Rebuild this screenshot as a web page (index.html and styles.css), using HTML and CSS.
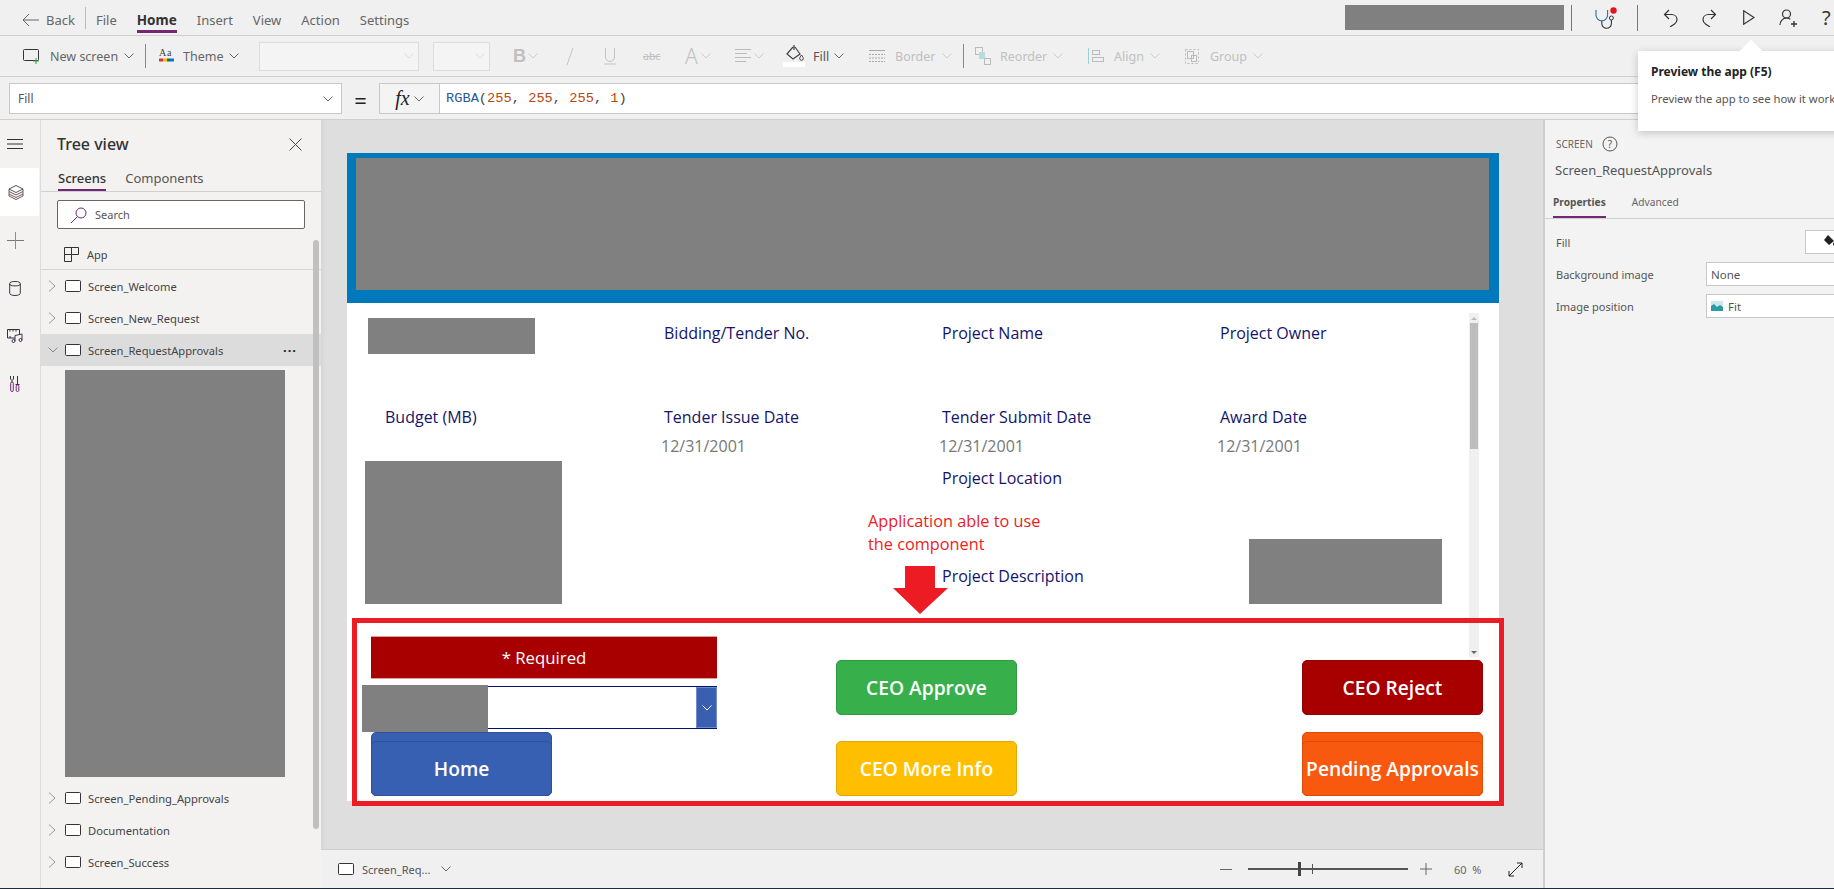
FILE: index.html
```html
<!DOCTYPE html>
<html lang="en">

<head>
    <meta charset="UTF-8">
    <meta name="viewport" content="width=device-width, initial-scale=1.0">
    <title>Power Apps Studio</title>
    <link rel="stylesheet" href="styles.css">
</head>

<body>
    <svg class="sprite" width="0" height="0">
        <symbol id="chev" viewBox="0 0 10 6">
            <path d="M.5.5 5 5 9.5.5" fill="none" stroke="currentColor" />
        </symbol>
        <symbol id="chev-right" viewBox="0 0 8 12">
            <path d="M1 .5 7 6 1 11.5" fill="none" stroke="currentColor" />
        </symbol>
        <symbol id="screen" viewBox="0 0 16 12">
            <rect x=".5" y=".5" width="15" height="11" rx="1" fill="#fff" stroke="#333" />
        </symbol>
    </svg>

    <!-- top menu -->
    <header class="menu-bar">
        <svg class="back-icon" width="17" height="14" viewBox="0 0 17 14">
            <path d="M7 1 1 7l6 6M1 7h16" fill="none" stroke="#666" />
        </svg>
        <span class="menu-back">Back</span>
        <span class="menu-sep"></span>
        <nav class="menu-items">
            <a>File</a>
            <a class="active">Home</a>
            <a>Insert</a>
            <a>View</a>
            <a>Action</a>
            <a>Settings</a>
        </nav>
        <div class="menu-right">
            <div class="redacted app-name"></div>
            <span class="menu-sep tall"></span>
            <svg class="a-steth" width="22" height="22" viewBox="0 0 22 22">
                <path d="M1 3v5a5.800 5.800 0 0 0 11.600 0V3" fill="none" stroke="#2b6ca8" stroke-width="1.100" />
                <path d="M6.800 14v2.500a4.800 4.800 0 0 0 9.600 0V13" fill="none" stroke="#333" stroke-width="1.100" />
                <circle cx="16.400" cy="11" r="2" fill="none" stroke="#333" />
                <circle cx="18.500" cy="3.500" r="3.200" fill="#e81123" />
            </svg>
            <span class="menu-sep tall second"></span>
            <svg class="a-undo" width="15" height="18" viewBox="0 0 15 18">
                <path d="M6 1 1.500 5.500 6 10M1.500 5.500h7c3.500 0 5.500 2.500 5.500 5 0 2-1 3.500-2.500 4.500L7 18" fill="none" stroke="#333" stroke-width="1.200" />
            </svg>
            <svg class="a-redo" width="15" height="18" viewBox="0 0 15 18">
                <path d="M9 1l4.500 4.500L9 10M13.500 5.500h-7C3 5.500 1 8 1 10.500c0 2 1 3.500 2.500 4.500L8 18" fill="none" stroke="#333" stroke-width="1.200" />
            </svg>
            <svg class="a-play" width="12" height="15" viewBox="0 0 12 15">
                <path d="M.7.800v13.400l10.300-6.700z" fill="none" stroke="#333" stroke-width="1.200" />
            </svg>
            <svg class="a-person" width="18" height="18" viewBox="0 0 18 18">
                <circle cx="7.500" cy="5" r="4" fill="none" stroke="#333" stroke-width="1.200" />
                <path d="M1 16c0-3.800 2.800-7 6.500-7 1.500 0 2.800.5 3.800 1.300" fill="none" stroke="#333" stroke-width="1.200" />
                <path d="M15 12v6M12 15h6" stroke="#333" stroke-width="1.300" />
            </svg>
            <span class="help-mark">?</span>
        </div>
    </header>

    <!-- ribbon -->
    <div class="ribbon">
        <div class="tool t-new">
            <svg width="17" height="15" viewBox="0 0 17 15">
                <rect x=".5" y=".5" width="15" height="11" rx="1" fill="none" stroke="#333" />
                <path d="M13 9v6M10 12h6" stroke="#3a9c3a" fill="none" />
            </svg>
            <span>New screen</span>
            <svg class="chev"><use href="#chev" /></svg>
        </div>
        <span class="ribbon-sep"></span>
        <div class="tool t-theme">
            <svg width="15" height="16" viewBox="0 0 15 16">
                <text x="0" y="8" class="theme-a">A</text>
                <text x="8" y="8" class="theme-a">a</text>
                <path d="M0 12h4" stroke="#d13438" stroke-width="3" />
                <path d="M4 12h4" stroke="#ffb900" stroke-width="3" />
                <path d="M8 12h3" stroke="#107c10" stroke-width="3" />
                <path d="M11 12h4" stroke="#0078d4" stroke-width="3" />
            </svg>
            <span>Theme</span>
            <svg class="chev"><use href="#chev" /></svg>
        </div>
        <div class="ribbon-select font-family"><svg class="chev"><use href="#chev" /></svg></div>
        <div class="ribbon-select font-size"><svg class="chev"><use href="#chev" /></svg></div>
        <div class="tool off t-bold"><b class="glyph-b">B</b><svg class="chev"><use href="#chev" /></svg></div>
        <div class="tool off t-italic"><svg width="8" height="17" viewBox="0 0 8 17"><path d="M7 0 1 17" stroke="#c4c4c4" /></svg></div>
        <div class="tool off t-under"><svg width="12" height="17" viewBox="0 0 12 17"><path d="M1.500 0v9a4.500 4.500 0 0 0 9 0V0M0 16h12" fill="none" stroke="#c4c4c4" /></svg></div>
        <div class="tool off t-strike"><span class="glyph-abc">abc</span></div>
        <div class="tool off t-color"><span class="glyph-a">A</span><svg class="chev"><use href="#chev" /></svg></div>
        <div class="tool off t-align">
            <svg width="16" height="14" viewBox="0 0 16 14"><path d="M0 .5h16M0 4.500h12M0 8.500h16M0 12.500h11" stroke="#bbb" fill="none" /></svg>
            <svg class="chev"><use href="#chev" /></svg>
        </div>
        <div class="tool t-fill">
            <div class="fill-icon">
                <svg width="18" height="17" viewBox="0 0 18 17">
                    <path d="M8 0v5M7 2 1 9l6 5 7-5-5-7" fill="none" stroke="#444" stroke-width="1.200" />
                    <path d="M15.500 10c1 1.500 1.800 2.500 1.800 3.500a1.800 1.800 0 0 1-3.600 0c0-1 .8-2 1.800-3.500z" fill="none" stroke="#444" />
                </svg>
            </div>
            <span>Fill</span>
            <svg class="chev"><use href="#chev" /></svg>
        </div>
        <div class="tool off t-border">
            <svg width="16" height="12" viewBox="0 0 16 12"><path d="M0 .5h16" stroke="#aaa" /><path d="M0 4.500h16M0 8h16M0 11.500h16" stroke="#aaa" stroke-dasharray="2 1" /></svg>
            <span>Border</span>
            <svg class="chev"><use href="#chev" /></svg>
        </div>
        <span class="ribbon-sep"></span>
        <div class="tool off t-reorder">
            <svg width="16" height="18" viewBox="0 0 16 18">
                <rect x=".5" y=".5" width="7" height="7" fill="none" stroke="#bbb" />
                <rect x="4" y="5" width="6" height="7" fill="#b5dde0" />
                <rect x="9.500" y="11.500" width="6" height="6" fill="none" stroke="#bbb" />
            </svg>
            <span>Reorder</span>
            <svg class="chev"><use href="#chev" /></svg>
        </div>
        <div class="tool off t-arrange">
            <svg width="16" height="16" viewBox="0 0 16 16">
                <path d="M.5 0v16" stroke="#9fd0d6" />
                <rect x="4.500" y="2.500" width="7" height="4" fill="none" stroke="#bbb" />
                <rect x="4.500" y="9.500" width="11" height="4" fill="none" stroke="#bbb" />
            </svg>
            <span>Align</span>
            <svg class="chev"><use href="#chev" /></svg>
        </div>
        <div class="tool off t-group">
            <svg width="16" height="17" viewBox="0 0 16 17">
                <rect x="1.500" y="1.500" width="13" height="14" fill="none" stroke="#bbb" stroke-dasharray="2 2" />
                <rect x="3.500" y="3.500" width="6" height="7" fill="none" stroke="#bbb" />
                <rect x="7.500" y="7.500" width="5" height="6" fill="none" stroke="#bbb" />
            </svg>
            <span>Group</span>
            <svg class="chev"><use href="#chev" /></svg>
        </div>
    </div>

    <!-- formula bar -->
    <div class="formula-bar">
        <div class="prop-select">
            <span>Fill</span>
            <svg class="chev"><use href="#chev" /></svg>
        </div>
        <span class="equals">=</span>
        <div class="fx-btn">
            <i>fx</i>
            <svg class="chev"><use href="#chev" /></svg>
        </div>
        <div class="formula-input"><span class="fn">RGBA</span>(<span class="num">255</span>, <span class="num">255</span>, <span class="num">255</span>, <span class="num">1</span>)</div>
    </div>

    <div class="tooltip">
        <span class="tooltip-arrow"></span>
        <h4>Preview the app (F5)</h4>
        <p>Preview the app to see how it works</p>
    </div>

    <main class="workspace">
        <!-- icon rail -->
        <aside class="rail">
            <div class="rail-item">
                <svg width="16" height="10" viewBox="0 0 16 10"><path d="M0 .5h16M0 5h16M0 9.500h16" stroke="#333" /></svg>
            </div>
            <div class="rail-item on">
                <svg width="16" height="15" viewBox="0 0 16 15">
                    <path d="M8 .5 15 4 8 7.500 1 4z" fill="none" stroke="#555" />
                    <path d="M1 4v2.500L8 10l7-3.500V4M1 6.500V9l7 3.500L15 9V6.500M1 9v2l7 3.500 7-3.500V9" fill="none" stroke="#6b5a5a" />
                </svg>
            </div>
            <div class="rail-item">
                <svg width="17" height="17" viewBox="0 0 17 17"><path d="M0 8.500h17" stroke="#777" /><path d="M8.500 0v17" stroke="#9a8a70" /></svg>
            </div>
            <div class="rail-item">
                <svg width="12" height="15" viewBox="0 0 12 15">
                    <ellipse cx="6" cy="2.700" rx="5.300" ry="2.200" fill="none" stroke="#3a3a4a" />
                    <path d="M.7 2.700v9.600c0 1.200 2.300 2.200 5.300 2.200s5.300-1 5.300-2.200V2.700" fill="none" stroke="#3a3a4a" />
                </svg>
            </div>
            <div class="rail-item">
                <svg width="17" height="14" viewBox="0 0 17 14">
                    <path d="M8 9H.5V.5h12V5" fill="none" stroke="#333" />
                    <path d="M3 .5v2M6 .5v2M9 .5v2M3 7v2" stroke="#333" />
                    <path d="M8 12V6.500l7-1.500v6" fill="none" stroke="#4a2f55" />
                    <circle cx="6.500" cy="12" r="1.500" fill="none" stroke="#4a2f55" />
                    <circle cx="13.500" cy="11" r="1.500" fill="none" stroke="#4a2f55" />
                </svg>
            </div>
            <div class="rail-item">
                <svg width="10" height="16" viewBox="0 0 10 16">
                    <path d="M.5 0v3l1.500 1.500L3.500 3V0M2 4.500V6" fill="none" stroke="#333" />
                    <rect x=".7" y="6" width="2.600" height="9.500" rx="1.200" fill="none" stroke="#742774" />
                    <path d="M7.500 0v8M5.500 8.500h4" fill="none" stroke="#333" />
                    <rect x="6.200" y="9" width="2.600" height="6.500" rx="1.200" fill="none" stroke="#742774" />
                </svg>
            </div>
        </aside>

        <!-- tree view -->
        <aside class="tree">
            <div class="tree-head">
                <h3>Tree view</h3>
                <svg width="13" height="13" viewBox="0 0 13 13"><path d="M.5.5l12 12M12.500.5l-12 12" stroke="#444" /></svg>
            </div>
            <div class="tree-tabs">
                <span class="active">Screens</span>
                <span>Components</span>
            </div>
            <div class="tree-search">
                <svg width="18" height="18" viewBox="0 0 18 18">
                    <circle cx="11" cy="7" r="5" fill="none" stroke="#742774" />
                    <path d="M7.500 10.500 1 17" stroke="#742774" />
                </svg>
                <span>Search</span>
            </div>
            <div class="tree-app">
                <svg width="15" height="15" viewBox="0 0 15 15">
                    <path d="M.5.500h14v7h-7v7h-7zM.5 7.500h7M7.500.5v7" fill="none" stroke="#333" />
                </svg>
                <span>App</span>
            </div>
            <div class="tree-row"><svg class="row-chev"><use href="#chev-right" /></svg><svg class="row-screen"><use href="#screen" /></svg><span>Screen_Welcome</span></div>
            <div class="tree-row"><svg class="row-chev"><use href="#chev-right" /></svg><svg class="row-screen"><use href="#screen" /></svg><span>Screen_New_Request</span></div>
            <div class="tree-row selected">
                <svg class="row-chev-down"><use href="#chev" /></svg><svg class="row-screen"><use href="#screen" /></svg><span>Screen_RequestApprovals</span>
                <span class="row-more">···</span>
            </div>
            <div class="redacted tree-children"></div>
            <div class="tree-row"><svg class="row-chev"><use href="#chev-right" /></svg><svg class="row-screen"><use href="#screen" /></svg><span>Screen_Pending_Approvals</span></div>
            <div class="tree-row"><svg class="row-chev"><use href="#chev-right" /></svg><svg class="row-screen"><use href="#screen" /></svg><span>Documentation</span></div>
            <div class="tree-row"><svg class="row-chev"><use href="#chev-right" /></svg><svg class="row-screen"><use href="#screen" /></svg><span>Screen_Success</span></div>
            <div class="tree-scroll"></div>
        </aside>

        <!-- canvas -->
        <section class="center">
            <div class="stage">
                <div class="app-screen">
                    <div class="app-header">
                        <div class="redacted"></div>
                    </div>
                    <div class="form-grid">
                        <div class="redacted f-logo"></div>
                        <div class="f-label">Bidding/Tender No.</div>
                        <div class="f-label">Project Name</div>
                        <div class="f-label">Project Owner</div>

                        <div class="f-label budget">Budget (MB)</div>
                        <div class="f-label">Tender Issue Date</div>
                        <div class="f-label">Tender Submit Date</div>
                        <div class="f-label">Award Date</div>

                        <div></div>
                        <div class="f-date">12/31/2001</div>
                        <div class="f-date">12/31/2001</div>
                        <div class="f-date">12/31/2001</div>

                        <div class="redacted f-left-block"></div>
                        <div></div>
                        <div class="f-label location">Project Location</div>
                        <div></div>

                        <div></div>
                        <div class="f-label description">Project Description</div>
                        <div class="redacted f-right-block"></div>
                    </div>

                    <div class="gallery-scroll">
                        <span class="scroll-up"></span>
                        <span class="scroll-thumb"></span>
                        <span class="scroll-down"></span>
                    </div>

                    <div class="note">Application able to use<br>the component</div>
                    <svg class="note-arrow" width="55" height="48" viewBox="0 0 55 48">
                        <path d="M12 0h30v22h13L27 48 0 22h12z" fill="#ed1c24" />
                    </svg>

                    <!-- the component, boxed in red -->
                    <div class="component">
                        <div class="comp-col comp-left">
                            <div class="required">* Required</div>
                            <div class="combo">
                                <span class="combo-btn"><svg class="chev"><use href="#chev" /></svg></span>
                            </div>
                            <button class="btn btn-home"><span>Home</span></button>
                        </div>
                        <div class="comp-col comp-mid">
                            <button class="btn btn-approve">CEO Approve</button>
                            <button class="btn btn-info">CEO More Info</button>
                        </div>
                        <div class="comp-col comp-right">
                            <button class="btn btn-reject">CEO Reject</button>
                            <button class="btn btn-pending"><span>Pending Approvals</span></button>
                        </div>
                        <div class="redacted combo-cover"></div>
                    </div>
                </div>
            </div>

            <footer class="status-bar">
                <svg class="row-screen"><use href="#screen" /></svg>
                <span class="status-name">Screen_Req...</span>
                <svg class="chev"><use href="#chev" /></svg>
                <div class="zoom-ctl">
                    <span class="zoom-minus"></span>
                    <div class="zoom-slider"><span class="zoom-thumb"></span><span class="zoom-tick"></span></div>
                    <svg width="12" height="12" viewBox="0 0 12 12"><path d="M6 0v12M0 6h12" stroke="#666" /></svg>
                    <span class="zoom-value">60 &nbsp;%</span>
                    <svg class="zoom-fit" width="15" height="15" viewBox="0 0 15 15">
                        <path d="M14 1 1 14M9 1h5v5M1 9v5h5" fill="none" stroke="#222" />
                    </svg>
                </div>
            </footer>
        </section>

        <!-- properties -->
        <aside class="props">
            <div class="props-type">
                <span>SCREEN</span>
                <svg width="16" height="16" viewBox="0 0 16 16">
                    <circle cx="8" cy="8" r="7" fill="none" stroke="#555" />
                    <text x="8" y="11.500" class="help-q">?</text>
                </svg>
            </div>
            <div class="props-name">Screen_RequestApprovals</div>
            <div class="props-tabs">
                <span class="active">Properties</span>
                <span>Advanced</span>
            </div>
            <div class="prop-row row-fill">
                <label>Fill</label>
                <div class="fill-swatch">
                    <svg width="14" height="14" viewBox="0 0 14 14">
                        <path d="M5 1 1 6l5 5 5-4z" fill="#222" />
                        <circle cx="12" cy="10" r="2" fill="#222" />
                    </svg>
                </div>
            </div>
            <div class="prop-row">
                <label>Background image</label>
                <div class="prop-input">None</div>
            </div>
            <div class="prop-row">
                <label>Image position</label>
                <div class="prop-input">
                    <svg width="12" height="10" viewBox="0 0 12 10">
                        <rect width="12" height="10" fill="#cfe8ea" />
                        <path d="M0 10V5l3-2 3 3 3-2 3 2v4z" fill="#2a9aa5" />
                    </svg>
                    <span>Fit</span>
                </div>
            </div>
        </aside>
    </main>
</body>

</html>
```

FILE: styles.css
```css
* {
    box-sizing: border-box;
}

html,
body {
    margin: 0;
    padding: 0;
}

body {
    width: 1834px;
    height: 889px;
    overflow: hidden;
    position: relative;
    font-family: "Noto Sans", Arial, sans-serif;
    font-size: 12px;
    color: #444;
    background-color: #f0f0f0;
    border-bottom: 1px solid #1f2d3a;
}

.sprite {
    position: absolute;
}

.redacted {
    background-color: #808080;
}

.chev {
    width: 10px;
    height: 6px;
    flex: none;
    color: #666;
}

/* top menu */
.menu-bar {
    height: 36px;
    display: flex;
    align-items: center;
    padding-left: 22px;
    border-bottom: 1px solid #cfcfcf;
}

.back-icon {
    margin-top: 5px;
}

.menu-back {
    margin-top: 5px;
    margin-left: 7px;
    width: 39px;
    color: #666;
    font-size: 13px;
}

.menu-sep {
    width: 1px;
    height: 22px;
    background-color: #bbb;
    flex: none;
}

.menu-items {
    display: flex;
    height: 33px;
    align-self: flex-start;
    margin-left: 10px;
}

.menu-items a {
    line-height: 40px;
    font-size: 13px;
    color: #666;
    margin-right: 20px;
}

.menu-items a.active {
    color: #333;
    font-size: 13.5px;
    font-weight: 700;
    border-bottom: 3px solid #742774;
}

.menu-right {
    margin-left: auto;
    display: flex;
    align-items: center;
    padding-right: 2px;
}

.app-name {
    width: 219px;
    height: 25px;
    margin-right: 7px;
}

.menu-sep.tall {
    height: 26px;
    background-color: #777;
}

.a-steth {
    margin-left: 23px;
    flex: none;
}

.menu-sep.second {
    margin-left: 20px;
}

.a-undo {
    margin-left: 25px;
    flex: none;
}

.a-redo {
    margin-left: 24px;
    flex: none;
}

.a-play {
    margin-left: 26px;
    flex: none;
}

.a-person {
    margin-left: 24px;
    flex: none;
}

.help-mark {
    margin-left: 25px;
    width: 10px;
    font-size: 20px;
    line-height: 24px;
    color: #333;
}

/* ribbon */
.ribbon {
    height: 41px;
    display: flex;
    align-items: center;
    padding-left: 23px;
    border-bottom: 1px solid #cfcfcf;
    font-size: 12.5px;
}

.tool {
    display: flex;
    align-items: center;
    flex: none;
    color: #666;
}

.tool span {
    margin-left: 10px;
    margin-right: 6px;
}

.tool.off {
    color: #c0c0c0;
}

.tool.off .chev {
    color: #ccc;
}

.ribbon-sep {
    width: 1px;
    height: 24px;
    background-color: #888;
    flex: none;
}

.t-new {
    width: 122px;
}

.t-theme {
    width: 100px;
    margin-left: 13px;
}

.t-theme span {
    margin-left: 9px;
}

.theme-a {
    font-family: "Liberation Serif", serif;
    font-size: 10px;
    fill: #444;
}

.ribbon-select {
    height: 29px;
    background-color: #f4f4f4;
    border: 1px solid #dcdcdc;
    display: flex;
    align-items: center;
    justify-content: flex-end;
    padding-right: 4px;
    flex: none;
}

.ribbon-select .chev {
    color: #ddd;
}

.font-family {
    width: 160px;
}

.font-size {
    width: 57px;
    margin-left: 14px;
    margin-right: 23px;
}

.glyph-b {
    font-size: 18px;
    font-family: "Liberation Sans", sans-serif;
    margin-right: 2px;
}

.t-bold {
    width: 53px;
}

.t-italic {
    width: 38px;
}

.t-under {
    width: 39px;
}

.t-strike {
    width: 42px;
}

.t-strike .glyph-abc {
    margin: 0;
    font-size: 10.5px;
    line-height: 1;
    text-decoration: line-through;
}

.t-color {
    width: 50px;
}

.t-color .glyph-a {
    margin: 0 3px 0 0;
    font-size: 21px;
    font-weight: 300;
    line-height: 1;
}

.t-align {
    width: 48px;
}

.t-align .chev {
    margin-left: 3px;
}

.t-fill {
    width: 86px;
}

.fill-icon {
    width: 22px;
    height: 22px;
    padding-left: 3px;
    flex: none;
    background: linear-gradient(#f0f0f0 17px, #fff 17px);
}

.t-fill span {
    margin-left: 8px;
    margin-right: 5px;
    color: #555;
}

.t-border {
    width: 94px;
}

.t-reorder {
    width: 113px;
    margin-left: 11px;
}

.t-reorder span {
    margin-left: 9px;
}

.t-arrange {
    width: 96px;
}

.t-group {
    width: 90px;
}

/* formula bar */
.formula-bar {
    height: 43px;
    display: flex;
    padding: 6px 0 5px 9px;
    border-bottom: 1px solid #cfcfcf;
}

.prop-select {
    width: 333px;
    background-color: #fff;
    border: 1px solid #c8c8c8;
    display: flex;
    align-items: center;
    justify-content: space-between;
    padding: 0 8px;
    color: #555;
}

.equals {
    width: 37px;
    text-align: center;
    font-size: 22px;
    line-height: 34px;
    color: #222;
}

.fx-btn {
    width: 61px;
    background-color: #f4f4f4;
    border: 1px solid #c8c8c8;
    display: flex;
    align-items: center;
    justify-content: center;
    gap: 4px;
    font-family: "Liberation Serif", serif;
    font-size: 20px;
    color: #222;
}

.formula-input {
    flex: 1;
    background-color: #fff;
    border: 1px solid #c8c8c8;
    border-left: 0;
    padding-left: 6px;
    font-family: "Liberation Mono", monospace;
    font-size: 13.7px;
    line-height: 29px;
    color: #444;
}

.fn {
    color: #2b579a;
}

.num {
    color: #b5490f;
}

/* tooltip over the play button */
.tooltip {
    position: absolute;
    left: 1638px;
    top: 51px;
    width: 300px;
    height: 80px;
    background-color: #fff;
    padding: 13px;
    box-shadow: 0 2px 8px rgba(0, 0, 0, 0.2);
    z-index: 5;
}

.tooltip-arrow {
    position: absolute;
    left: 105px;
    top: -8px;
    width: 16px;
    height: 16px;
    background-color: #fff;
    transform: rotate(45deg);
}

.tooltip h4 {
    position: relative;
    margin: 0;
    font-size: 12px;
    line-height: 16px;
    color: #222;
}

.tooltip p {
    margin: 11px 0 0;
    font-size: 11.3px;
    line-height: 16px;
    color: #555;
    white-space: nowrap;
}

/* workspace */
.workspace {
    height: 768px;
    display: flex;
}

.rail {
    width: 41px;
    flex: none;
    border-right: 1px solid #dcdcdc;
    background-color: #f3f2f1;
}

.rail-item {
    height: 48px;
    display: flex;
    align-items: center;
    justify-content: center;
    padding-right: 10px;
}

.rail-item.on {
    background-color: #fff;
    width: 39px;
    padding-right: 8px;
    border-radius: 0 2px 2px 0;
}

/* tree */
.tree {
    width: 280px;
    flex: none;
    position: relative;
    background-color: #f3f2f1;
}

.tree-head {
    height: 48px;
    display: flex;
    align-items: center;
    justify-content: space-between;
    padding: 0 19px 0 16px;
}

.tree-head h3 {
    margin: 0;
    font-size: 16px;
    font-weight: 500;
    color: #333;
}

.tree-tabs {
    height: 24px;
    display: flex;
    gap: 19px;
    padding-left: 17px;
    border-bottom: 1px solid #d0d0d0;
    font-size: 13px;
    line-height: 20px;
    color: #555;
}

.tree-tabs .active {
    height: 23px;
    color: #333;
    font-weight: 500;
    border-bottom: 2px solid #742774;
}

.tree-search {
    height: 29px;
    margin: 8px 16px 0;
    width: 248px;
    background-color: #fff;
    border: 1px solid #666;
    border-radius: 2px;
    display: flex;
    align-items: center;
    gap: 7px;
    padding-left: 12px;
    font-size: 11px;
    color: #555;
}

.tree-app {
    height: 41px;
    display: flex;
    align-items: center;
    gap: 8px;
    padding: 11px 0 0 23px;
    border-bottom: 1px solid #d6d6d6;
    font-size: 11px;
    color: #444;
}

.tree-row {
    height: 32px;
    display: flex;
    align-items: center;
    font-size: 11.2px;
    color: #444;
    padding-left: 7px;
}

.tree-row.selected {
    background-color: #dcdcdc;
}

.row-chev {
    width: 8px;
    height: 12px;
    color: #999;
    margin-right: 9px;
    flex: none;
}

.row-chev-down {
    width: 10px;
    height: 6px;
    color: #888;
    margin-right: 7px;
    flex: none;
}

.row-screen {
    width: 16px;
    height: 12px;
    margin-right: 7px;
    flex: none;
}

.row-more {
    margin-left: auto;
    margin-right: 24px;
    font-weight: 700;
    font-size: 13px;
    letter-spacing: 1px;
    color: #222;
}

.tree-children {
    width: 220px;
    height: 407px;
    margin: 4px 0 5px 24px;
}

.tree-scroll {
    position: absolute;
    left: 272px;
    top: 120px;
    width: 6px;
    height: 589px;
    background-color: #c0c0c0;
    border-radius: 3px;
}

/* canvas */
.center {
    width: 1222px;
    flex: none;
    display: flex;
    flex-direction: column;
}

.stage {
    flex: 1;
    background-color: #dedede;
    padding: 33px 0 0 26px;
    box-shadow: inset 6px 0 6px -6px rgba(0, 0, 0, 0.08);
}

.app-screen {
    position: relative;
    width: 1152px;
    height: 648px;
    background-color: #fff;
}

.app-header {
    height: 150px;
    background-color: #0079bc;
    padding: 5px 10px 13px 9px;
}

.app-header .redacted {
    height: 132px;
}

.form-grid {
    display: grid;
    grid-template-columns: 317px 278px 278px 1fr;
    grid-template-rows: 84px 30px 29px 78px 65px;
    padding-top: 15px;
    font-family: "Open Sans", sans-serif;
}

.f-label {
    font-size: 16px;
    line-height: 30px;
    white-space: nowrap;
    color: #14146b;
}

.f-logo {
    width: 167px;
    height: 36px;
    margin-left: 21px;
}

.budget {
    margin-left: 38px;
}

.f-date {
    margin-left: -3px;
    font-size: 16px;
    line-height: 28px;
    color: #777;
}

.f-left-block {
    grid-row: 4 / span 2;
    width: 197px;
    margin-left: 18px;
}

.location {
    margin-top: 2px;
}

.description {
    margin-top: 22px;
    grid-column: 3;
}

.f-right-block {
    width: 193px;
    margin-left: 29px;
}

.gallery-scroll {
    position: absolute;
    left: 1122px;
    top: 160px;
    width: 10px;
    height: 344px;
    background-color: #f0f0f0;
}

.scroll-up,
.scroll-down {
    position: absolute;
    left: 2px;
    border-left: 3px solid transparent;
    border-right: 3px solid transparent;
}

.scroll-up {
    top: 4px;
    border-bottom: 3px solid #bbb;
}

.scroll-down {
    bottom: 3px;
    border-top: 3px solid #666;
}

.scroll-thumb {
    position: absolute;
    left: 1px;
    top: 10px;
    width: 8px;
    height: 126px;
    background-color: #bdbdbd;
}

.note {
    position: absolute;
    left: 521px;
    top: 357px;
    font-family: "Open Sans", sans-serif;
    font-size: 16.3px;
    line-height: 23px;
    white-space: nowrap;
    color: #ed1c24;
}

.note-arrow {
    position: absolute;
    left: 546px;
    top: 413px;
}

/* component */
.component {
    position: absolute;
    left: 5px;
    top: 465px;
    width: 1152px;
    height: 188px;
    border: 5px solid #ed1c24;
    display: flex;
    font-family: "Open Sans", sans-serif;
}

.comp-col {
    display: flex;
    flex-direction: column;
    flex: none;
}

.comp-left {
    width: 346px;
    margin-left: 14px;
    padding-top: 13px;
}

.comp-mid {
    width: 181px;
    margin-left: 119px;
    padding-top: 37px;
    gap: 26px;
}

.comp-right {
    width: 181px;
    margin-left: 285px;
    padding-top: 37px;
    gap: 17px;
}

.required {
    height: 43px;
    background-color: #a80000;
    border-top: 1px solid #d9a0a0;
    border-bottom: 1px solid #d9a0a0;
    color: #fff;
    font-size: 16.8px;
    line-height: 41px;
    text-align: center;
}

.combo {
    height: 43px;
    margin-top: 7px;
    background-color: #fff;
    border: 1px solid #00127a;
    border-left: 0;
    border-right: 0;
    display: flex;
    justify-content: flex-end;
}

.combo-btn {
    width: 21px;
    background-color: #3a5fb0;
    border: 1px solid #6f8bc9;
    display: flex;
    align-items: center;
    justify-content: center;
}

.combo-btn .chev {
    color: #fff;
}

.combo-cover {
    position: absolute;
    left: 5px;
    top: 62px;
    width: 126px;
    height: 47px;
}

.btn {
    display: block;
    width: 181px;
    height: 55px;
    padding: 0;
    font-family: "Open Sans", sans-serif;
    font-size: 19.2px;
    font-weight: 600;
    color: #fff;
    white-space: nowrap;
    border: 1px solid transparent;
    border-radius: 5px;
}

.btn-home,
.btn-pending {
    height: 64px;
    padding-top: 9px;
    position: relative;
}

.btn-home span,
.btn-pending span {
    display: flex;
    align-items: center;
    justify-content: center;
    position: absolute;
    left: -1px;
    right: -1px;
    top: 8px;
    bottom: -1px;
    border-radius: 5px;
    white-space: nowrap;
}

.btn-home {
    width: 181px;
    margin-top: 3px;
    background-color: #3860b2;
    border-color: #2f519a;
}

.btn-home span {
    border: 1px solid #2f519a;
}

.btn-approve {
    background-color: #37b04c;
    border-color: #2f9c43;
}

.btn-info {
    background-color: #ffbf00;
    border-color: #e0a800;
}

.btn-reject {
    background-color: #a80000;
    border-color: #8f0000;
}

.btn-pending {
    background-color: #f8590e;
    border-color: #d94c0a;
}

.btn-pending span {
    border: 1px solid #d94c0a;
}

/* status bar */
.status-bar {
    height: 39px;
    border-top: 1px solid #cfcfcf;
    background-color: #f0f0f0;
    display: flex;
    align-items: center;
    padding-left: 17px;
    font-size: 11px;
    color: #555;
}

.status-bar .row-screen {
    margin-right: 8px;
}

.status-name {
    margin-right: 11px;
}

.zoom-ctl {
    margin-left: auto;
    margin-right: 20px;
    display: flex;
    align-items: center;
}

.zoom-minus {
    width: 12px;
    height: 1px;
    background-color: #666;
}

.zoom-slider {
    position: relative;
    width: 160px;
    height: 2px;
    margin: 0 12px 0 16px;
    background-color: #555;
}

.zoom-thumb {
    position: absolute;
    left: 50px;
    top: -6px;
    width: 3px;
    height: 14px;
    background-color: #444;
}

.zoom-tick {
    position: absolute;
    left: 64px;
    top: -4px;
    width: 1px;
    height: 10px;
    background-color: #555;
}

.zoom-value {
    margin-left: 22px;
    width: 31px;
    white-space: nowrap;
    color: #666;
}

.zoom-fit {
    margin-left: 23px;
}

/* properties */
.props {
    flex: 1;
    background-color: #f3f3f3;
    border-left: 2px solid #cfcfcf;
    padding-top: 15px;
    position: relative;
}

.props-type {
    display: flex;
    align-items: center;
    gap: 9px;
    padding-left: 11px;
    height: 18px;
    font-size: 10px;
    color: #666;
}

.props-name {
    margin: 7px 0 0 10px;
    font-size: 13px;
    line-height: 20px;
    color: #555;
}

.help-q {
    font-size: 10px;
    text-anchor: middle;
    fill: #555;
}

.props-tabs {
    display: flex;
    gap: 26px;
    height: 29px;
    margin-top: 10px;
    padding-left: 8px;
    border-bottom: 1px solid #cfcfcf;
    font-size: 10.2px;
    line-height: 24px;
    color: #666;
}

.props-tabs .active {
    height: 28px;
    font-weight: 700;
    color: #555;
    border-bottom: 2px solid #742774;
}

.prop-row {
    display: flex;
    align-items: center;
    height: 24px;
    margin-top: 8px;
    padding-left: 11px;
    font-size: 11px;
    color: #555;
}

.row-fill {
    margin-top: 11px;
}

.prop-row label {
    width: 150px;
    flex: none;
}

.fill-swatch {
    margin-left: 99px;
    width: 60px;
    height: 24px;
    background-color: #fff;
    border: 1px solid #c8c8c8;
    padding: 3px 0 0 17px;
    flex: none;
}

.prop-input {
    width: 200px;
    height: 24px;
    flex: none;
    background-color: #fff;
    border: 1px solid #c8c8c8;
    display: flex;
    align-items: center;
    gap: 5px;
    padding-left: 4px;
    font-size: 11.5px;
    color: #555;
}
```
